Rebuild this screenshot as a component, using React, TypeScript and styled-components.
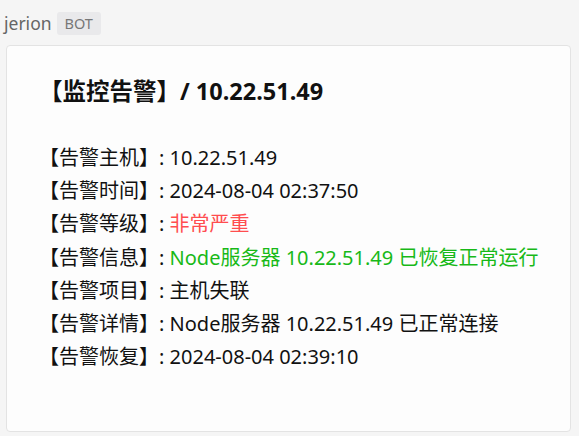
import * as React from 'react';
import styled, { createGlobalStyle } from 'styled-components';

const GlobalStyle = createGlobalStyle`
  html, body {
    margin: 0;
    padding: 0;
    background: #f5f5f5;
  }
  body {
    font-family: "Noto Sans", "Noto Sans CJK SC", sans-serif;
  }
`;

const Page = styled.div`
  width: 579px;
  height: 436px;
  box-sizing: border-box;
  padding: 10px 8px 4px 4px;
  display: flex;
  flex-direction: column;
  gap: 9px;
`;

const Sender = styled.div`
  display: flex;
  align-items: center;
  gap: 5px;
  height: 26px;
`;

const SenderName = styled.span`
  font-size: 17.5px;
  color: #666;
`;

const Badge = styled.span`
  background: #e9e9eb;
  color: #777;
  font-size: 14.5px;
  padding: 2px 8px;
  border-radius: 3px;
  line-height: 19px;
`;

const Card = styled.div`
  flex: 1;
  margin-left: 2px;
  background: #fdfdfd;
  border: 1px solid #e3e3e3;
  border-radius: 4px;
  padding: 29px 30px 0 32px;
  box-sizing: border-box;
`;

const Title = styled.div`
  font-size: 23.5px;
  font-weight: 700;
  color: #111;
  line-height: 32px;
  margin-bottom: 34px;
`;

const Row = styled.div`
  font-size: 20px;
  line-height: 33.2px;
  color: #111;
  white-space: nowrap;
`;

const Value = styled.span<{ $tone?: 'red' | 'green' }>`
  color: ${(p) => (p.$tone === 'red' ? '#ff4d4f' : p.$tone === 'green' ? '#18b918' : '#111')};
`;

const rows: { label: string; value: string; tone?: 'red' | 'green' }[] = [
  { label: '告警主机', value: '10.22.51.49' },
  { label: '告警时间', value: '2024-08-04 02:37:50' },
  { label: '告警等级', value: '非常严重', tone: 'red' },
  { label: '告警信息', value: 'Node服务器 10.22.51.49 已恢复正常运行', tone: 'green' },
  { label: '告警项目', value: '主机失联' },
  { label: '告警详情', value: 'Node服务器 10.22.51.49 已正常连接' },
  { label: '告警恢复', value: '2024-08-04 02:39:10' },
];

export default function App() {
  return (
    <>
      <GlobalStyle />
      <Page>
        <Sender>
          <SenderName>jerion</SenderName>
          <Badge>BOT</Badge>
        </Sender>
        <Card>
          <Title>【监控告警】/ 10.22.51.49</Title>
          {rows.map((r) => (
            <Row key={r.label}>
              【{r.label}】: <Value $tone={r.tone}>{r.value}</Value>
            </Row>
          ))}
        </Card>
      </Page>
    </>
  );
}
